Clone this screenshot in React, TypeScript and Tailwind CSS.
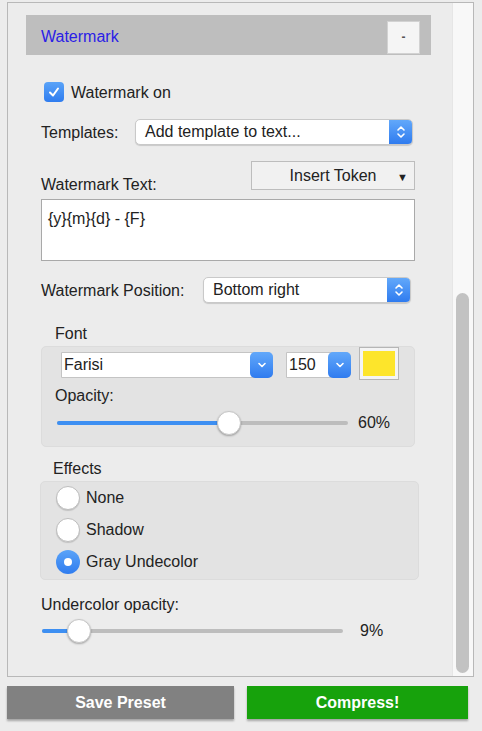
import React from "react";

const UpDown = () => (
  <svg width="10" height="14" viewBox="0 0 10 14" fill="none" stroke="white" strokeWidth="1.6" strokeLinecap="round" strokeLinejoin="round">
    <path d="M2 5 L5 2 L8 5" />
    <path d="M2 9 L5 12 L8 9" />
  </svg>
);

const Down = () => (
  <svg width="10" height="8" viewBox="0 0 10 8" fill="none" stroke="white" strokeWidth="1.6" strokeLinecap="round" strokeLinejoin="round">
    <path d="M2 2.5 L5 5.5 L8 2.5" />
  </svg>
);

function MacSelect({ text, width }: { text: string; width: string }) {
  return (
    <div className={`${width} h-[26px] flex bg-white rounded-[5px] border border-[#c9c9c9] shadow-[0_1px_1px_rgba(0,0,0,0.15)] overflow-hidden`}>
      <div className="flex-1 pl-[9px] leading-[24px] text-[#222]">{text}</div>
      <div className="w-[23px] h-full bg-gradient-to-b from-[#62a8fa] to-[#2f7bef] flex items-center justify-center">
        <UpDown />
      </div>
    </div>
  );
}

function Combo({ text, width }: { text: string; width: string }) {
  return (
    <div className={`${width} h-[26px] flex bg-white border border-[#c4c4c4] rounded-r-[5px]`}>
      <div className="flex-1 pl-[2px] leading-[24px] text-[#222]">{text}</div>
      <div className="w-[23px] h-[26px] -mt-[1px] -mr-[1px] rounded-[5px] bg-gradient-to-b from-[#62a8fa] to-[#2f7bef] flex items-center justify-center">
        <Down />
      </div>
    </div>
  );
}

function Slider({ trackMl, trackW, thumbLeft, value, valueMl }: { trackMl: string; trackW: number; thumbLeft: number; value: string; valueMl: string }) {
  return (
    <div className="flex items-center h-[24px]">
      <div className={`${trackMl} relative h-[24px] flex items-center`} style={{ width: trackW }}>
        <div className="w-full h-[4px] rounded-full bg-[#bdbdbd]" />
        <div className="absolute left-0 top-[10px] h-[4px] rounded-full bg-[#3d8ff2]" style={{ width: thumbLeft + 12 }} />
        <div
          className="absolute top-0 w-[24px] h-[24px] rounded-full bg-white border border-[#c6c6c6] shadow-[0_1px_2px_rgba(0,0,0,0.3)]"
          style={{ left: thumbLeft }}
        />
      </div>
      <div className={`${valueMl} text-[#222]`}>{value}</div>
    </div>
  );
}

function Radio({ label, checked }: { label: string; checked?: boolean }) {
  return (
    <div className="flex items-center h-[24px]">
      {checked ? (
        <div className="w-[24px] h-[24px] rounded-full bg-gradient-to-b from-[#5aa3f8] to-[#2f7cef] flex items-center justify-center">
          <div className="w-[8px] h-[8px] rounded-full bg-white" />
        </div>
      ) : (
        <div className="w-[24px] h-[24px] rounded-full bg-white border border-[#bdbdbd] shadow-[0_1px_1px_rgba(0,0,0,0.15)]" />
      )}
      <span className="ml-[6px] text-[#222]">{label}</span>
    </div>
  );
}

export default function App() {
  return (
    <div
      className="w-[482px] h-[731px] bg-[#ececec] overflow-hidden text-[16px]"
      style={{ fontFamily: '"Liberation Sans", Arial, sans-serif' }}
    >
      <div className="ml-[7px] mt-[2px] w-[467px] h-[675px] border border-[#b8b8b8] flex">
        <div className="w-[444px] flex flex-col">
          {/* Header */}
          <div className="ml-[18px] mt-[12px] w-[405px] h-[40px] bg-[#bebebe] flex items-center justify-between">
            <span className="ml-[15px] mt-[4px] text-[#2a20e6]">Watermark</span>
            <div className="mr-[11px] mt-[4px] w-[33px] h-[33px] bg-[#f5f5f5] border border-[#d2d2d2] flex items-center justify-center text-[#555] text-[12px] font-bold">
              -
            </div>
          </div>

          {/* Checkbox */}
          <div className="mt-[27px] ml-[36px] h-[20px] flex items-center">
            <div className="w-[20px] h-[20px] rounded-[4px] bg-gradient-to-b from-[#5aa3f8] to-[#2f7cef] flex items-center justify-center">
              <svg width="14" height="14" viewBox="0 0 14 14" fill="none" stroke="white" strokeWidth="2" strokeLinecap="round" strokeLinejoin="round">
                <path d="M3 7.5 L6 10.5 L11 3.5" />
              </svg>
            </div>
            <span className="ml-[7px] mt-[1px] text-[#222]">Watermark on</span>
          </div>

          {/* Templates */}
          <div className="mt-[17px] ml-[33px] h-[26px] flex items-center">
            <span className="w-[94px] mt-[1px] text-[#222]">Templates:</span>
            <MacSelect text="Add template to text..." width="w-[278px]" />
          </div>

          {/* Watermark text label + Insert Token */}
          <div className="mt-[16px] ml-[33px] w-[374px] h-[34px] flex justify-between">
            <span className="self-end leading-[20px] text-[#222]">Watermark Text:</span>
            <div className="w-[164px] h-[29px] bg-[#f1f1f1] border border-[#bdbdbd] flex items-center relative">
              <span className="w-full text-center mt-[1px] text-[#222]">Insert Token</span>
              <span className="absolute right-[6px] top-[7px] text-[11px] text-[#222]">▼</span>
            </div>
          </div>

          {/* Textarea */}
          <div className="mt-[4px] ml-[33px] w-[374px] h-[62px] bg-white border border-[#a9a9a9] pl-[6px] pt-[10px] leading-[18px] text-[#222]">
            {"{y}{m}{d} - {F}"}
          </div>

          {/* Position */}
          <div className="mt-[16px] ml-[33px] h-[26px] flex items-center">
            <span className="w-[162px] mt-[1px] text-[#222]">Watermark Position:</span>
            <MacSelect text="Bottom right" width="w-[208px]" />
          </div>

          {/* Font */}
          <div className="mt-[21px] ml-[47px] leading-[20px] text-[#222]">Font</div>
          <div className="mt-[2px] ml-[33px] w-[374px] h-[101px] bg-[#e3e3e3] rounded-[5px] border border-[#dcdcdc] flex flex-col">
            <div className="flex items-start">
              <div className="ml-[19px] mt-[5px]">
                <Combo text="Farisi" width="w-[212px]" />
              </div>
              <div className="ml-[13px] mt-[5px]">
                <Combo text="150" width="w-[65px]" />
              </div>
              <div className="ml-[8px] w-[40px] h-[33px] border border-[#b5b5b5] bg-[#f4f4f4] p-[3px]">
                <div className="w-full h-full bg-[#fde52b]" />
              </div>
            </div>
            <div className="mt-[6px] ml-[13px] leading-[20px] text-[#222]">Opacity:</div>
            <div className="mt-[5px]">
              <Slider trackMl="ml-[15px]" trackW={291} thumbLeft={160} value="60%" valueMl="ml-[10px]" />
            </div>
          </div>

          {/* Effects */}
          <div className="mt-[12px] ml-[45px] leading-[20px] text-[#222]">Effects</div>
          <div className="mt-[2px] ml-[32px] w-[379px] h-[99px] bg-[#e3e3e3] rounded-[5px] border border-[#dcdcdc] pl-[15px] pt-[4px] flex flex-col gap-[8px]">
            <Radio label="None" />
            <Radio label="Shadow" />
            <Radio label="Gray Undecolor" checked />
          </div>

          {/* Undercolor */}
          <div className="mt-[15px] ml-[33px] leading-[20px] text-[#222]">Undercolor opacity:</div>
          <div className="mt-[4px]">
            <Slider trackMl="ml-[34px]" trackW={301} thumbLeft={25} value="9%" valueMl="ml-[17px]" />
          </div>
        </div>

        {/* Scroll track */}
        <div className="w-[21px] h-full bg-[#f8f8f8] border-l border-[#e6e6e6] pt-[290px] pl-[3px]">
          <div className="w-[13px] h-[380px] rounded-full bg-[#c2c2c2]" />
        </div>
      </div>

      {/* Bottom buttons */}
      <div className="mt-[9px] ml-[7px] flex gap-[13px]">
        <div className="w-[227px] h-[33px] bg-[#818181] text-white font-bold flex items-center justify-center shadow-[0_2px_2px_rgba(0,0,0,0.3)]">
          Save Preset
        </div>
        <div className="w-[221px] h-[33px] bg-[#17a20c] text-white font-bold flex items-center justify-center shadow-[0_2px_2px_rgba(0,0,0,0.3)]">
          Compress!
        </div>
      </div>
    </div>
  );
}
